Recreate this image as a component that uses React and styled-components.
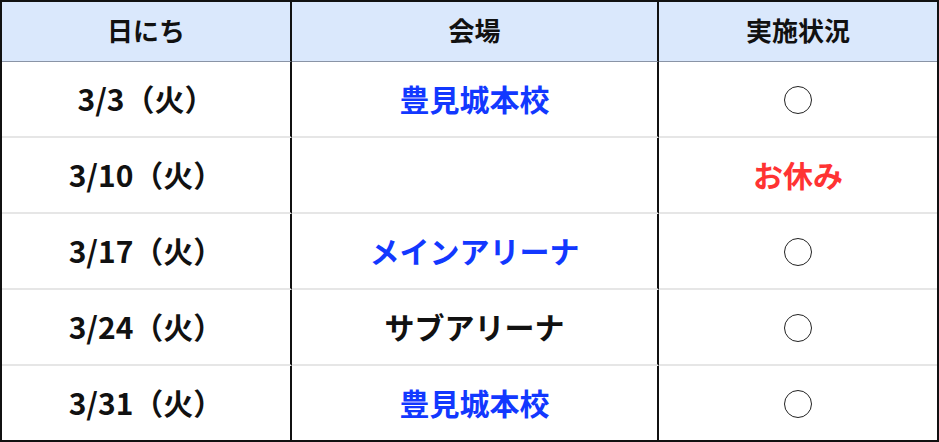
import React from "react";
import styled, { createGlobalStyle } from "styled-components";

const GlobalStyle = createGlobalStyle`
  html, body {
    margin: 0;
    padding: 0;
    background: #ffffff;
  }
  body {
    font-family: "Noto Sans CJK JP", "Noto Sans", sans-serif;
  }
`;

const rows = [
  { date: "3/3（火）", place: "豊見城本校", tone: "blue" },
  { date: "3/10（火）", place: "", tone: "blue", off: true },
  { date: "3/17（火）", place: "メインアリーナ", tone: "blue" },
  { date: "3/24（火）", place: "サブアリーナ", tone: "black" },
  { date: "3/31（火）", place: "豊見城本校", tone: "blue" },
];

const Table = styled.table`
  width: 939px;
  height: 442px;
  border-collapse: separate;
  border-spacing: 0;
  border: 2px solid #111111;
  box-sizing: border-box;
  table-layout: fixed;
`;

const HeadCell = styled.th`
  height: 56px;
  padding: 0 0 3px;
  background: #dae8fc;
  border-bottom: 1px solid #8a94a6;
  border-right: ${(p) => (p.last ? "none" : "2px solid #111111")};
  font-size: 26px;
  font-weight: 700;
  color: #111111;
  text-align: center;
  vertical-align: middle;
  line-height: 1;
`;

const Cell = styled.td`
  height: 71px;
  padding: 0 0 3px;
  border-bottom: ${(p) => (p.lastRow ? "none" : "2px solid #e6e6e6")};
  border-right: ${(p) => (p.last ? "none" : "2px solid #111111")};
  font-size: 30px;
  font-weight: 700;
  line-height: 1;
  text-align: center;
  vertical-align: middle;
  color: ${(p) =>
    p.tone === "blue" ? "#1238ff" : p.tone === "red" ? "#ff3333" : "#111111"};
`;

const Circle = styled.span`
  display: inline-block;
  width: 26px;
  height: 26px;
  border: 1.5px solid #222222;
  border-radius: 50%;
  vertical-align: middle;
`;

export default function App() {
  return (
    <>
      <GlobalStyle />
      <Table>
        <colgroup>
          <col style={{ width: 290 }} />
          <col style={{ width: 367 }} />
          <col />
        </colgroup>
        <thead>
          <tr>
            <HeadCell>日にち</HeadCell>
            <HeadCell>会場</HeadCell>
            <HeadCell last>実施状況</HeadCell>
          </tr>
        </thead>
        <tbody>
          {rows.map((r, i) => {
            const lastRow = i === rows.length - 1;
            return (
              <tr key={r.date}>
                <Cell lastRow={lastRow}>{r.date}</Cell>
                <Cell lastRow={lastRow} tone={r.tone}>
                  {r.place}
                </Cell>
                <Cell lastRow={lastRow} last tone={r.off ? "red" : "black"}>
                  {r.off ? "お休み" : <Circle aria-label="○" />}
                </Cell>
              </tr>
            );
          })}
        </tbody>
      </Table>
    </>
  );
}
